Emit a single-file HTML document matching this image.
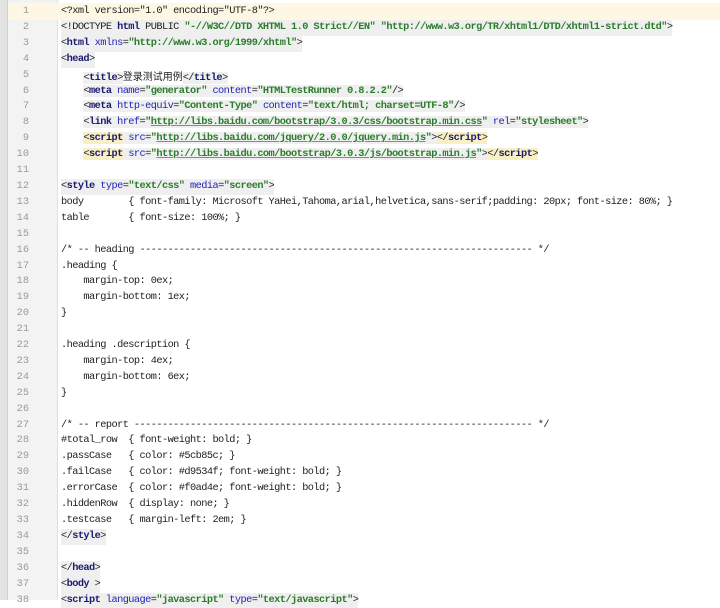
<!DOCTYPE html>
<html><head><meta charset="utf-8"><style>
html,body{margin:0;padding:0;width:720px;height:600px;overflow:hidden;background:#fff}
#strip{position:absolute;left:0;top:0;width:7px;height:600px;background:#e2e2e2;border-right:1px solid #d0d0d0}
#gut{position:absolute;left:8px;top:0;width:49px;height:600px;background:#f3f3f3;border-right:1px solid #e0e0e0}
#hl{position:absolute;left:8px;top:3px;width:712px;height:17px;background:#fdf7e4}
#code{position:absolute;left:0;top:4px;width:720px;font-family:"Liberation Mono","Noto Sans CJK SC",monospace;font-size:10.3px;letter-spacing:-0.57px;line-height:15.92px;color:#1e1e1e}
.l{height:15.92px;position:relative}
.n{position:absolute;left:8px;width:21px;text-align:right;color:#9a9a9a;letter-spacing:0}
.c{position:absolute;left:61px;white-space:pre}
.t{color:#1b1b70;font-weight:bold}
.a{color:#2323b8}
.v{color:#2b7d2b;font-weight:bold}
.u{text-decoration:underline;text-decoration-color:#888}
.g{background:#efefef}
.y{background:#f8efc4}
.cj{font-family:"Noto Sans CJK SC",sans-serif;font-size:10px;letter-spacing:0}
</style></head><body>
<div id="strip"></div><div id="gut"></div><div id="hl"></div>
<div id="code"><div class="l"><span class="n">1</span><span class="c">&lt;?xml version="1.0" encoding="UTF-8"?&gt;</span></div><div class="l"><span class="n">2</span><span class="c g">&lt;!DOCTYPE <span class="t">html</span> PUBLIC <span class="v">"-//W3C//DTD XHTML 1.0 Strict//EN"</span> <span class="v">"http://www.w3.org/TR/xhtml1/DTD/xhtml1-strict.dtd"</span>&gt;</span></div><div class="l"><span class="n">3</span><span class="c g">&lt;<span class="t">html</span> <span class="a">xmlns</span>=<span class="v">"http://www.w3.org/1999/xhtml"</span>&gt;</span></div><div class="l"><span class="n">4</span><span class="c g">&lt;<span class="t">head</span>&gt;</span></div><div class="l"><span class="n">5</span><span class="c">    <span class="g">&lt;<span class="t">title</span>&gt;</span><span class="cj">登录测试用例</span><span class="g">&lt;/<span class="t">title</span>&gt;</span></span></div><div class="l"><span class="n">6</span><span class="c">    <span class="g">&lt;<span class="t">meta</span> <span class="a">name</span>=<span class="v">"generator"</span> <span class="a">content</span>=<span class="v">"HTMLTestRunner 0.8.2.2"</span>/&gt;</span></span></div><div class="l"><span class="n">7</span><span class="c">    <span class="g">&lt;<span class="t">meta</span> <span class="a">http-equiv</span>=<span class="v">"Content-Type"</span> <span class="a">content</span>=<span class="v">"text/html; charset=UTF-8"</span>/&gt;</span></span></div><div class="l"><span class="n">8</span><span class="c">    <span class="g">&lt;<span class="t">link</span> <span class="a">href</span>=<span class="v">"<span class="u">http://libs.baidu.com/bootstrap/3.0.3/css/bootstrap.min.css</span>"</span> <span class="a">rel</span>=<span class="v">"stylesheet"</span>&gt;</span></span></div><div class="l"><span class="n">9</span><span class="c">    <span class="g"><span class="y">&lt;<span class="t">script</span></span> <span class="a">src</span>=<span class="v">"<span class="u">http://libs.baidu.com/jquery/2.0.0/jquery.min.js</span>"</span>&gt;<span class="y">&lt;/<span class="t">script</span>&gt;</span></span></span></div><div class="l"><span class="n">10</span><span class="c">    <span class="g"><span class="y">&lt;<span class="t">script</span></span> <span class="a">src</span>=<span class="v">"<span class="u">http://libs.baidu.com/bootstrap/3.0.3/js/bootstrap.min.js</span>"</span>&gt;<span class="y">&lt;/<span class="t">script</span>&gt;</span></span></span></div><div class="l"><span class="n">11</span></div><div class="l"><span class="n">12</span><span class="c g">&lt;<span class="t">style</span> <span class="a">type</span>=<span class="v">"text/css"</span> <span class="a">media</span>=<span class="v">"screen"</span>&gt;</span></div><div class="l"><span class="n">13</span><span class="c">body        { font-family: Microsoft YaHei,Tahoma,arial,helvetica,sans-serif;padding: 20px; font-size: 80%; }</span></div><div class="l"><span class="n">14</span><span class="c">table       { font-size: 100%; }</span></div><div class="l"><span class="n">15</span></div><div class="l"><span class="n">16</span><span class="c">/* -- heading ---------------------------------------------------------------------- */</span></div><div class="l"><span class="n">17</span><span class="c">.heading {</span></div><div class="l"><span class="n">18</span><span class="c">    margin-top: 0ex;</span></div><div class="l"><span class="n">19</span><span class="c">    margin-bottom: 1ex;</span></div><div class="l"><span class="n">20</span><span class="c">}</span></div><div class="l"><span class="n">21</span></div><div class="l"><span class="n">22</span><span class="c">.heading .description {</span></div><div class="l"><span class="n">23</span><span class="c">    margin-top: 4ex;</span></div><div class="l"><span class="n">24</span><span class="c">    margin-bottom: 6ex;</span></div><div class="l"><span class="n">25</span><span class="c">}</span></div><div class="l"><span class="n">26</span></div><div class="l"><span class="n">27</span><span class="c">/* -- report ----------------------------------------------------------------------- */</span></div><div class="l"><span class="n">28</span><span class="c">#total_row  { font-weight: bold; }</span></div><div class="l"><span class="n">29</span><span class="c">.passCase   { color: #5cb85c; }</span></div><div class="l"><span class="n">30</span><span class="c">.failCase   { color: #d9534f; font-weight: bold; }</span></div><div class="l"><span class="n">31</span><span class="c">.errorCase  { color: #f0ad4e; font-weight: bold; }</span></div><div class="l"><span class="n">32</span><span class="c">.hiddenRow  { display: none; }</span></div><div class="l"><span class="n">33</span><span class="c">.testcase   { margin-left: 2em; }</span></div><div class="l"><span class="n">34</span><span class="c g">&lt;/<span class="t">style</span>&gt;</span></div><div class="l"><span class="n">35</span></div><div class="l"><span class="n">36</span><span class="c g">&lt;/<span class="t">head</span>&gt;</span></div><div class="l"><span class="n">37</span><span class="c g">&lt;<span class="t">body</span> &gt;</span></div><div class="l"><span class="n">38</span><span class="c g">&lt;<span class="t">script</span> <span class="a">language</span>=<span class="v">"javascript"</span> <span class="a">type</span>=<span class="v">"text/javascript"</span>&gt;</span></div></div>
</body></html>
